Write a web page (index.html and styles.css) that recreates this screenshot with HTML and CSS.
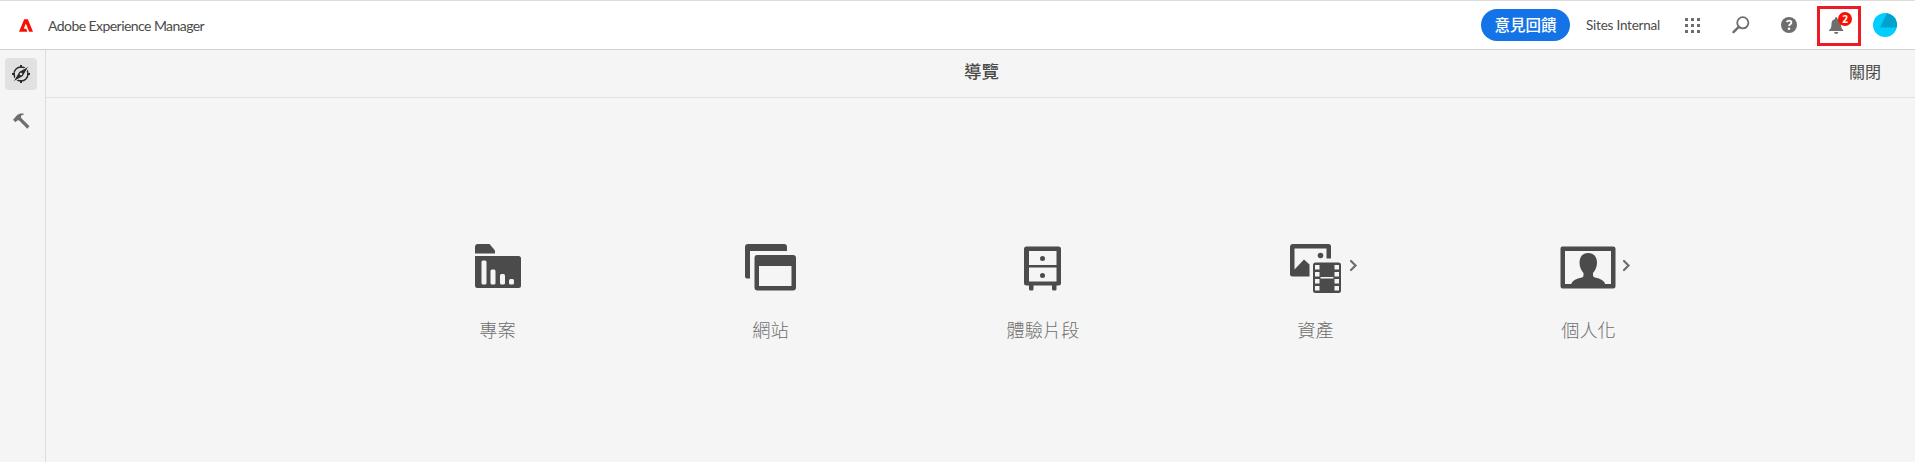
FILE: index.html
```html
<!DOCTYPE html>
<html lang="zh-Hant">
<head>
<meta charset="utf-8">
<title>Adobe Experience Manager</title>
<link rel="stylesheet" href="styles.css">
</head>
<body>
<header class="shell">
  <svg class="logo" width="14" height="13" viewBox="0 0 24 22"><path fill="#fa0f00" d="M14.235 21.620 12.490 16.770H8.117L11.795 7.512 17.374 21.620H24L15.155.379H8.909L0 21.620Z"/></svg>
  <span class="product">Adobe Experience Manager</span>
  <button class="feedback">意見回饋</button>
  <span class="org">Sites Internal</span>
  <svg class="apps" width="15" height="15" fill="#6e6e6e"><path d="M0 0h3v3H0zM6 0h3v3H6zM12 0h3v3h-3zM0 6h3v3H0zM6 6h3v3H6zM12 6h3v3h-3zM0 12h3v3H0zM6 12h3v3H6zM12 12h3v3h-3z"/></svg>
  <svg class="search" width="18" height="18" fill="none" stroke="#6e6e6e"><circle cx="10.800" cy="6.800" r="5.600" stroke-width="1.800"/><path d="m6.800 10.800-5.300 5.300" stroke-width="2.400" stroke-linecap="round"/></svg>
  <svg class="help" width="16" height="16"><circle cx="8" cy="8" r="8" fill="#6e6e6e"/><path d="M5.700 5.200c.5-1.200 1.300-1.600 2.400-1.600 1.400 0 2.300.8 2.300 2 0 1.600-2.300 1.900-2.300 3.500" fill="none" stroke="#fff" stroke-width="1.900"/><circle cx="8" cy="11.800" r="1.300" fill="#fff"/></svg>
  <div class="alerts">
    <svg class="bell" width="15" height="17" fill="#6e6e6e"><path d="M6 1.500Q6 0 7.200 0T8.500 1.500V2C11 2.500 12 4.500 12 7c0 3.500.8 5 2.300 6.300V14H0v-.7C1.700 12 2.500 10.500 2.500 7c0-2.500 1-4.500 3.500-5ZM5 15h4.500q-.4 2-2.200 2T5 15Z"/></svg>
    <span class="badge">2</span>
  </div>
  <svg class="avatar" width="24" height="24"><defs><clipPath id="disc"><circle cx="12" cy="12" r="12"/></clipPath></defs><g clip-path="url(#disc)"><path fill="#00ceff" d="M0 0h24v24H0z"/><path fill="#00a2cc" d="M14 0h10v14.500H7z"/></g></svg>
</header>
<div class="body">
  <nav class="rail">
    <a class="rail-item active"><svg width="18" height="18" viewBox="0 0 18 18"><circle cx="9" cy="9" r="7" fill="none" stroke="#2c2c2c" stroke-width="1.500"/><path d="M9 0v3M9 15v3M0 9h3M15 9h3" stroke="#2c2c2c" stroke-width="2"/><path d="M1 17 7 6.500 17 1 11 11.500Z" fill="#2c2c2c" stroke="#e1e1e1" stroke-width="1"/><circle cx="9" cy="9" r="1.300" fill="#e1e1e1"/></svg></a>
    <a class="rail-item"><svg width="18" height="18" viewBox="0 0 18 18"><path fill="#6e6e6e" d="m1 7.800 4.200-4.700C6.900 1.300 9.300 1.100 11.900 1.700v.9C10.200 2.700 9.200 3.500 8.900 4.600L9.200 6l8.300 8.300-2.200 2.400-8.100-8.300-1.700-.2L3.500 10.200Z"/></svg></a>
  </nav>
  <main class="panel">
    <div class="titlebar"><h1 class="title">導覽</h1><a class="close">關閉</a></div>
    <div class="tiles">
      <a class="tile">
        <svg class="icon" width="78" height="64" fill="#4b4b4b"><path d="M10 17.500V11q0-3 3-3H24.500L30 14.500V17.500Z"/><path d="M10 20H53.500Q56 20 56 22.500V49.500Q56 52 53.500 52H12.500Q10 52 10 49.500Z"/><g fill="#f5f5f5"><rect x="16.500" y="24.500" width="5" height="24" rx="1.500"/><rect x="25.500" y="33.500" width="5" height="15" rx="1.500"/><rect x="35" y="38" width="5" height="10.500" rx="1.500"/><rect x="44" y="43" width="5" height="5.500" rx="1.500"/></g></svg>
        <span class="label">專案</span>
      </a>
      <a class="tile">
        <svg class="icon" width="78" height="64" fill="#4b4b4b"><path d="M7 40.500V11q0-3 3-3H46q3 0 3 3v4H12V42.500H9q-2 0-2-2Z"/><path fill-rule="evenodd" d="M19 19H55q3 0 3 3V51.500q0 3-3 3H19.500q-3 0-3-3V22q0-3 2.500-3ZM21 30V50H53.500V30Z"/></svg>
        <span class="label">網站</span>
      </a>
      <a class="tile">
        <svg class="icon" width="78" height="64" fill="#4b4b4b"><path fill-rule="evenodd" d="M15.500 10.500H47.500q2.500 0 2.500 2.500V47q0 2.500-2.500 2.500H45.500V53q0 1.500-1.500 1.500H42.500q-1.500 0-1.500-1.500V49.500H22.500V53q0 1.500-1.500 1.500H19.500q-1.500 0-1.500-1.500V49.500H15.500Q13 49.500 13 47V13q0-2.500 2.500-2.500ZM18 15V29H45.500V15ZM18 31.500V45.500H45.500V31.500Z"/><circle cx="31.500" cy="22.500" r="2.500"/><circle cx="31.500" cy="39.500" r="2.500"/></svg>
        <span class="label">體驗片段</span>
      </a>
      <a class="tile">
        <svg class="icon" width="78" height="64" fill="#4b4b4b"><path d="M7 11q0-3 3-3H45.500q2.500 0 2.500 2.500V22.500H43.500V12.500H11.500V33.500L21 23.500 26.500 28.500V40.500H9.500Q7 40.500 7 38Z"/><circle cx="37.500" cy="19.500" r="2.800"/><rect x="30" y="26.500" width="28" height="30.500" rx="2.500"/><g fill="#f5f5f5"><path d="M32 29h4.500v4.500H32zM32 36h4.500v4.500H32zM32 43h4.500v4.500H32zM32 50h4.500v4.500H32zM51.500 29H56v4.500h-4.500zM51.500 36H56v4.500h-4.500zM51.500 43H56v4.500h-4.500zM51.500 50H56v4.500h-4.500zM37.500 41h13v1.500h-13z"/></g><path d="m68 25 4.500 4.500-4.500 4.500" fill="none" stroke="#6e6e6e" stroke-width="2.200" stroke-linecap="round"/></svg>
        <span class="label">資產</span>
      </a>
      <a class="tile">
        <svg class="icon" width="78" height="64" fill="#4b4b4b"><path fill-rule="evenodd" d="M6.500 10.500H57q2.500 0 2.500 2V50q0 2.500-2.500 2.500H6.500Q4.500 52.500 4.500 50V12.500q0-2 2-2ZM9 15V48H55V15Z"/><path d="M15 49C16 44.500 20 42.500 26 41.500q1.500-.5 1.500-2V37C25 34.500 23.500 30.500 23.500 26.500c0-6 3.500-9.500 8.700-9.500S41 20.500 41 26.500c0 4-1.500 8-4 10.500v2.500q0 1.500 2 2C44.500 42.500 48.500 44.500 49.500 49Z"/><path d="m68 25 4.500 4.500-4.500 4.500" fill="none" stroke="#6e6e6e" stroke-width="2.200" stroke-linecap="round"/></svg>
        <span class="label">個人化</span>
      </a>
    </div>
  </main>
</div>
</body>
</html>
```
FILE: styles.css
```css
* { box-sizing: border-box; }
body {
  margin: 0;
  height: 462px;
  display: flex;
  flex-direction: column;
  overflow: hidden;
  background: #f5f5f5;
  color: #4b4b4b;
  font-family: Lato, "Noto Sans CJK TC", sans-serif;
}
.shell {
  height: 50px;
  flex: none;
  display: flex;
  align-items: center;
  padding: 0 18px 0 19px;
  background: #fff;
  border-top: 1px solid #dcdcdc;
  border-bottom: 1px solid #d0d0d0;
}
.product { margin-left: 15px; font-size: 14px; letter-spacing: -0.56px; white-space: nowrap; }
.feedback {
  width: 89px;
  height: 32px;
  margin-left: auto;
  padding: 0 0 3px;
  border: 0;
  border-radius: 16px;
  background: #1473e6;
  color: #fff;
  font: 500 15.5px "Noto Sans CJK TC", sans-serif;
}
.org { width: 75px; margin-left: 16px; font-size: 13.5px; letter-spacing: -0.22px; white-space: nowrap; }
.apps { margin-left: 24px; }
.search { margin-left: 32px; }
.help { margin-left: 31px; }
.alerts {
  position: relative;
  width: 44px;
  height: 40px;
  margin: 2px 0 0 20px;
  padding: 8px 0 0 9px;
  border: 3px solid #ed1c24;
}
.bell { display: block; }
.badge {
  position: absolute;
  top: 3px;
  left: 18px;
  width: 14px;
  height: 14px;
  border-radius: 50%;
  background: #fa0f00;
  color: #fff;
  font: 700 10px/14px "Open Sans", sans-serif;
  text-align: center;
}
.avatar { margin-left: 12px; }
.body { flex: 1; display: flex; }
.rail {
  width: 46px;
  display: flex;
  flex-direction: column;
  gap: 15px;
  padding: 8px 0 0 5px;
  border-right: 1px solid #dcdcdc;
}
.rail-item {
  display: flex;
  align-items: center;
  justify-content: center;
  width: 32px;
  height: 32px;
  border-radius: 4px;
}
.active { background: #e1e1e1; }
.panel { flex: 1; }
.titlebar {
  height: 48px;
  display: grid;
  grid-template-columns: 1fr auto 1fr;
  align-items: center;
  padding: 0 34px 3px 36px;
  border-bottom: 1px solid #e1e1e1;
}
.title { grid-column: 2; margin: 0; font-size: 17.5px; font-weight: 500; line-height: 24px; }
.close { justify-self: end; font-size: 16px; line-height: 24px; }
.tiles {
  display: grid;
  grid-template-columns: 273px 273px 272px 273px 273px;
  padding: 138px 0 0 315px;
}
.icon { display: block; margin-left: 104px; }
.label {
  display: block;
  margin-top: 17px;
  color: #6e6e6e;
  font-size: 18.2px;
  font-weight: 300;
  line-height: 26px;
  text-align: center;
}
```
